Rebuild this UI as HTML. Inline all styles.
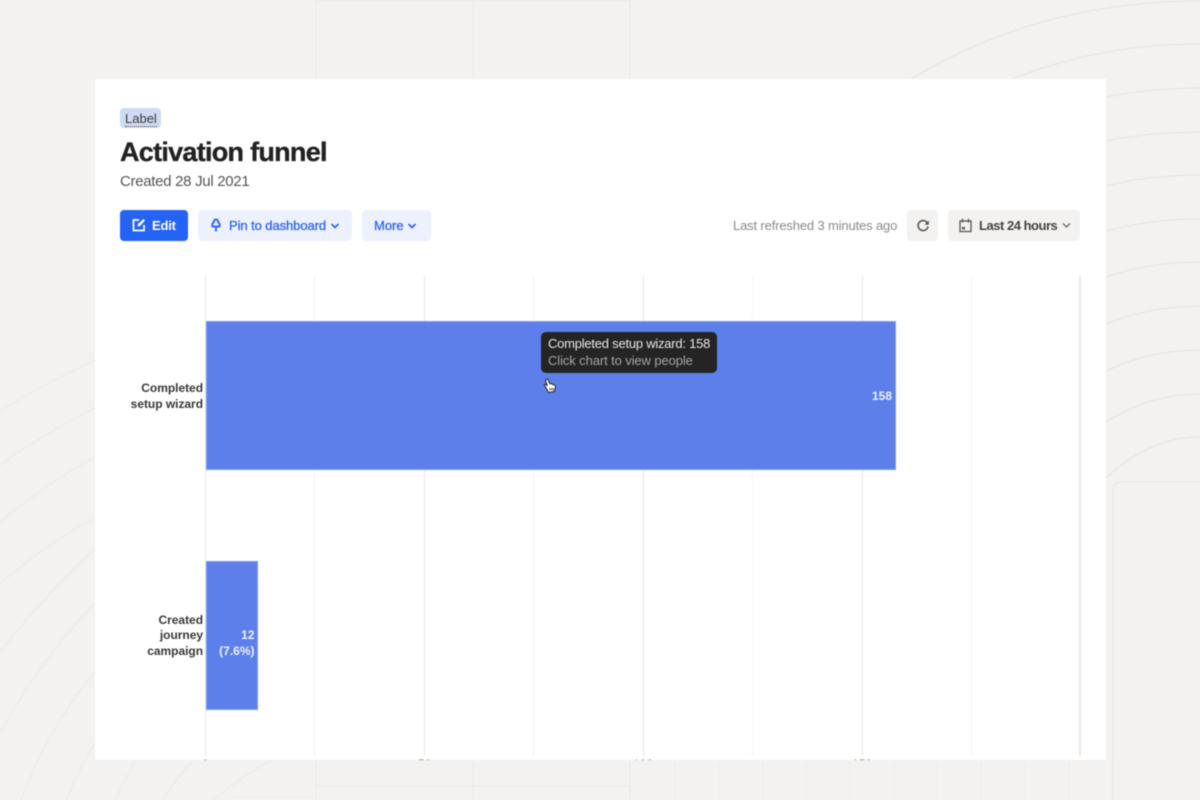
<!DOCTYPE html>
<html>
<head>
<meta charset="utf-8">
<style>
html,body{margin:0;padding:0;width:1200px;height:800px;overflow:hidden;background:#f3f2f0;font-family:"Liberation Sans",sans-serif}
#bg{position:absolute;left:0;top:0}
#card{position:absolute;left:95px;top:79px;width:1011px;height:681px;background:#fff;overflow:hidden}
.wrap{position:absolute;left:0;top:0;width:1200px;height:800px;filter:blur(.5px)}
.t{position:absolute;white-space:nowrap}
.b{position:absolute;border-radius:4px}
.g{position:absolute;top:197px;height:480px;width:1px;background:#f5f4f3}
.g.d{background:#e8e7e5;width:1.5px;margin-left:-.3px}
.bar{position:absolute;background:#5c7fea;border:1px solid #7f9af0;box-sizing:border-box}
.lab{position:absolute;font-weight:700;font-size:12px;line-height:15.5px;color:#383838;text-align:right;width:100px;letter-spacing:-.03px}
.val{position:absolute;font-weight:700;font-size:12px;line-height:15.5px;color:#eef2ff;text-align:right}
svg{position:absolute}
</style>
</head>
<body>
<div class="wrap">
<svg id="bg" width="1200" height="800" viewBox="0 0 1200 800" fill="none" stroke="#e3e2e3" stroke-width="1">
<path d="M911 79Q1040 1 1200 1"/>
<path d="M1012 79Q1100 44 1200 44"/>
<path d="M1106 97Q1150 88 1200 88"/>
<path d="M1106 141Q1150 132 1200 132"/>
<path d="M1106 186Q1150 175 1200 175"/>
<path d="M1106 231Q1150 219 1200 219"/>
<path d="M1106 277Q1150 262 1200 262"/>
<path d="M1106 324Q1150 306 1200 306"/>
<path d="M1106 371Q1150 350 1200 350"/>
<path d="M1106 422Q1150 394 1200 394"/>
<path d="M1106 478Q1150 437 1200 437"/>
<path d="M1200 482H1122Q1113 482 1113 491V800" stroke="#e7e6e5"/>
<g stroke="#ebeae8">
<path d="M0 411Q45 383 95 360"/>
<path d="M0 465Q45 433 95 408"/>
<path d="M0 522Q45 485 95 457"/>
<path d="M0 584Q45 545 95 517"/>
<path d="M0 652Q45 595 95 549"/>
<path d="M0 733Q40 660 95 603"/>
<path d="M21 800Q50 725 95 672"/>
<path d="M67 800Q78 770 95 743"/>
<path d="M115 800Q124 780 136 760"/>
<path d="M163 800Q176 778 193 760"/>
<path d="M214 800Q240 777 272 760"/>
<path d="M230 797H316" stroke="#f0eeec"/>
<path d="M316 0V79M473 0V79M630 0V79M316 .5H630"/>
<path d="M316 760V800M473 760V800M630 760V800M316 786H630"/>
<path d="M675 760V800M719 760V800M763 760V800M806 760V800M850 760V800M894 760V800M937 760V800M981 760V800M1025 760V800M1069 760V800M1112 760V800" stroke="#eeedeb"/>
</g>
</svg>

<div id="card">
  <div class="b" style="left:25px;top:29px;width:41px;height:20px;background:#cfdaf3"></div>
  <div class="t" style="left:30px;top:31.5px;font-size:13px;line-height:15px;color:#3c3c3c;border-bottom:1px dotted #555">Label</div>
  <div class="t" style="left:25px;top:56px;font-size:27px;line-height:34px;font-weight:700;color:#222;letter-spacing:-.72px;-webkit-text-stroke:.35px #222">Activation funnel</div>
  <div class="t" style="left:25px;top:93.5px;font-size:15px;line-height:18px;color:#555;letter-spacing:-.3px">Created 28 Jul 2021</div>

  <div class="b" style="left:25px;top:131px;width:68px;height:31px;background:#2563f5"></div>
  <svg style="left:37px;top:139px" width="14" height="14" viewBox="0 0 14 14" fill="none" stroke="#fff" stroke-width="1.7"><path d="M7 2H1.5V12.5H12V7"/><path d="M5.5 8.5L6 6L11.5 1L13 2.5L8 8Z" fill="#fff" stroke="none"/></svg>
  <div class="t" style="left:57px;top:139px;font-size:13px;line-height:16px;font-weight:700;color:#fff;letter-spacing:-.2px">Edit</div>

  <div class="b" style="left:103px;top:131px;width:154px;height:31px;background:#edf1fd"></div>
  <svg style="left:115px;top:139px" width="12" height="15" viewBox="0 0 12 15" fill="none" stroke="#2f66f5" stroke-width="1.9"><path d="M6 1.5C7.8 1.5 8.3 3 8.2 4.5C9.5 5 10 6.5 9.5 8.5H2.5C2 6.5 2.5 5 3.8 4.5C3.7 3 4.2 1.5 6 1.5Z"/><path d="M6 9V13.5"/></svg>
  <div class="t" style="left:134px;top:139px;font-size:13px;line-height:16px;font-weight:400;color:#2f66f5;-webkit-text-stroke:.3px #2f66f5;letter-spacing:-.08px">Pin to dashboard</div>
  <svg style="left:235px;top:143px" width="10" height="8" viewBox="0 0 10 8" fill="none" stroke="#2f66f5" stroke-width="1.7"><path d="M1.5 2L5 5.5L8.5 2"/></svg>

  <div class="b" style="left:267px;top:131px;width:69px;height:31px;background:#edf1fd"></div>
  <div class="t" style="left:279px;top:139px;font-size:13px;line-height:16px;color:#2f66f5;-webkit-text-stroke:.3px #2f66f5">More</div>
  <svg style="left:312px;top:143px" width="10" height="8" viewBox="0 0 10 8" fill="none" stroke="#2f66f5" stroke-width="1.7"><path d="M1.5 2L5 5.5L8.5 2"/></svg>

  <div class="t" style="left:638px;top:139px;font-size:13px;line-height:16px;color:#8a8a8a;letter-spacing:-.15px">Last refreshed 3 minutes ago</div>

  <div class="b" style="left:812px;top:131px;width:31px;height:31px;background:#f3f2f0"></div>
  <svg style="left:820.5px;top:140px" width="14" height="14" viewBox="0 0 14 14" fill="none" stroke="#555" stroke-width="1.6"><path d="M11.5 4.2A5 5 0 1 0 12 7.5"/><path d="M12.8 1.5V5.8H8.5Z" fill="#555" stroke="none"/></svg>

  <div class="b" style="left:853px;top:131px;width:132px;height:31px;background:#f3f2f0"></div>
  <svg style="left:864px;top:139px" width="13" height="15" viewBox="0 0 13 15" fill="none" stroke="#555" stroke-width="1.3"><rect x="1" y="3" width="11" height="10.5"/><path d="M3.5 .8V4.5M9.5 .8V4.5"/><rect x="3" y="9" width="3" height="2.4" fill="#555" stroke="none"/></svg>
  <div class="t" style="left:884px;top:139px;font-size:13px;line-height:16px;font-weight:700;color:#444;letter-spacing:-.48px">Last 24 hours</div>
  <svg style="left:967px;top:143px" width="9" height="7" viewBox="0 0 9 7" fill="none" stroke="#666" stroke-width="1.3"><path d="M1 1.5L4.5 5L8 1.5"/></svg>

  <div class="g d" style="left:110px"></div>
  <div class="g" style="left:219px"></div>
  <div class="g d" style="left:329px"></div>
  <div class="g" style="left:438px"></div>
  <div class="g d" style="left:548px"></div>
  <div class="g" style="left:657px"></div>
  <div class="g d" style="left:767px"></div>
  <div class="g" style="left:876px"></div>
  <div class="g d" style="left:984.5px"></div>

  <div class="bar" style="left:111px;top:242px;width:690px;height:149px"></div>
  <div class="bar" style="left:111px;top:481.5px;width:52px;height:149px"></div>

  <div class="lab" style="left:8px;top:302px">Completed<br>setup wizard</div>
  <div class="lab" style="left:8px;top:533.5px">Created<br>journey<br>campaign</div>
  <div class="val" style="left:737px;top:309.5px;width:60px">158</div>
  <div class="val" style="left:99.5px;top:549px;width:60px">12<br>(7.6%)</div>

  <div class="b" style="left:446px;top:253px;width:176px;height:41px;background:#242424;border-radius:5px"></div>
  <div class="t" style="left:453px;top:257px;font-size:13px;line-height:16px;color:#e8e8e8;letter-spacing:-.23px">Completed setup wizard: 158</div>
  <div class="t" style="left:453px;top:274px;font-size:13px;line-height:16px;color:#a5a5a5;letter-spacing:-.1px">Click chart to view people</div>

  <svg style="left:448px;top:299px" width="14" height="17" viewBox="0 0 14 17"><path d="M3.5 1.5C4.5 1 5.2 1.6 5.5 2.5L6.5 5.5L9 6L11.5 7C12.5 7.6 12.7 8.5 12.5 9.5L11.5 13.5L5.5 14.5L3.5 10.5L1.5 7.5C1 6.6 2 5.8 3 6.6L4.3 7.8L2.7 3C2.5 2.4 2.8 1.8 3.5 1.5Z" fill="#fff" stroke="#222" stroke-width="1"/><path d="M7 10V12.5M8.8 10V12.5M10.5 10V12.5" stroke="#222" stroke-width=".8"/></svg>

  <div class="t" style="left:107px;top:678px;font-size:12px;line-height:14px;color:#555">0</div>
  <div class="t" style="left:323px;top:678px;font-size:12px;line-height:14px;color:#555">50</div>
  <div class="t" style="left:538px;top:678px;font-size:12px;line-height:14px;color:#555">100</div>
  <div class="t" style="left:757px;top:678px;font-size:12px;line-height:14px;color:#555">150</div>
</div>
</div>
</body>
</html>
